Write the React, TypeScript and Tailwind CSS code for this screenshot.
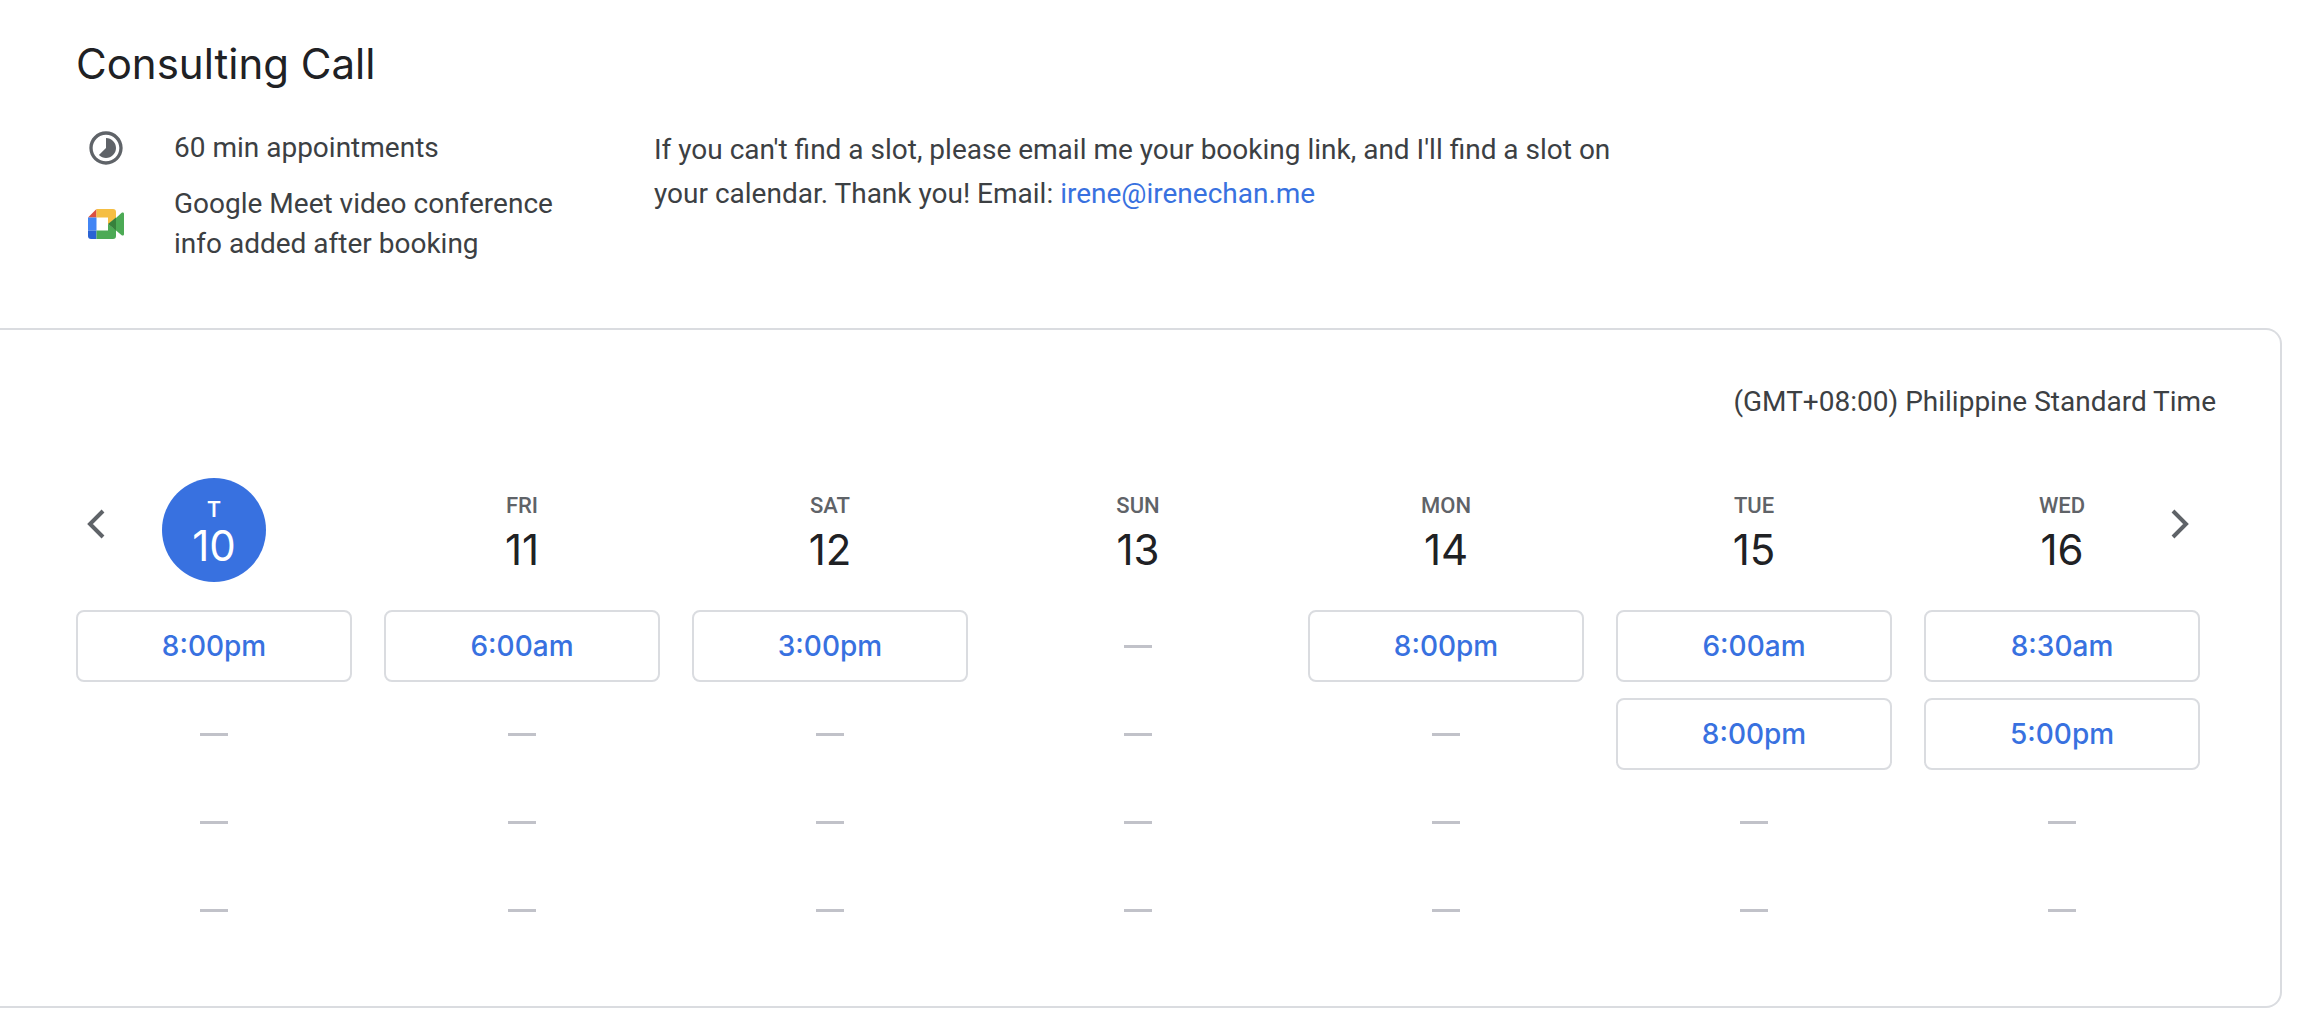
type Day = {
  label: string
  date: number
  slots: string[]
}

const days: Day[] = [
  { label: 'T', date: 10, slots: ['8:00pm'] },
  { label: 'FRI', date: 11, slots: ['6:00am'] },
  { label: 'SAT', date: 12, slots: ['3:00pm'] },
  { label: 'SUN', date: 13, slots: [] },
  { label: 'MON', date: 14, slots: ['8:00pm'] },
  { label: 'TUE', date: 15, slots: ['6:00am', '8:00pm'] },
  { label: 'WED', date: 16, slots: ['8:30am', '5:00pm'] },
]

const today = 10
const rows = [0, 1, 2, 3]

function classNames(...classes: any) {
  return classes.filter(Boolean).join(' ')
}

const DurationIcon = () => (
  <svg viewBox="0 0 24 24" className="h-10 w-10" fill="#5f6368" aria-hidden="true">
    <path d="M12 2C6.48 2 2 6.48 2 12s4.48 10 10 10 10-4.48 10-10S17.52 2 12 2zm0 18c-4.42 0-8-3.58-8-8s3.58-8 8-8 8 3.58 8 8-3.58 8-8 8z" />
    <path d="M12 6v6l-4.24 4.24C8.93 17.41 10.46 18 12 18c3.31 0 6-2.69 6-6s-2.69-6-6-6z" />
  </svg>
)

const MeetIcon = () => (
  <svg viewBox="0 0 36 30" className="h-[30px] w-9" aria-hidden="true">
    <path fill="#fff" d="M8 8h12v14H8z" />
    <path fill="#db4f40" d="M8.5 0v8.5H0z" />
    <path fill="#4285f4" d="M0 8.5h8.5v13H0z" />
    <path fill="#2a63d4" d="M0 21.5h8.5V30H3a3 3 0 0 1-3-3z" />
    <path fill="#f5be42" d="M8.5 0H25a3 3 0 0 1 3 3v6l-8 6.5v-7H8.5z" />
    <path fill="#4caa55" d="M8.5 30H25a3 3 0 0 0 3-3v-6l-8-6v6.5H8.5z" />
    <path fill="#4caa55" d="M28 9l5.7-5.2c.9-.7 2.3-.2 2.3 1v20.4c0 1.2-1.4 1.7-2.3 1L28 21.5z" />
    <path fill="#37813c" d="M28 8.5v13L20 15z" />
  </svg>
)

const Chevron = ({ d }: { d: string }) => (
  <svg viewBox="0 0 40 40" className="h-10 w-10" fill="none" stroke="#5f6368" strokeWidth="4" aria-hidden="true">
    <path d={d} />
  </svg>
)

const Header = () => (
  <header className="pl-[76px] pr-20 pt-9">
    <h1 className="font-[Inter,sans-serif] text-[42px] leading-14 text-[#202124]">Consulting Call</h1>
    <div className="mt-9 flex items-start">
      <ul className="w-[578px] shrink-0 space-y-4 pr-16 leading-10">
        <li className="flex items-center">
          <span className="flex w-[60px] shrink-0 justify-center">
            <DurationIcon />
          </span>
          <span className="ml-[38px]">60 min appointments</span>
        </li>
        <li className="flex items-center">
          <span className="flex w-[60px] shrink-0 justify-center">
            <MeetIcon />
          </span>
          <span className="ml-[38px]">Google Meet video conference info added after booking</span>
        </li>
      </ul>
      <p className="max-w-[1008px] leading-11">
        If you can't find a slot, please email me your booking link, and I'll find a slot on your calendar. Thank you!
        Email:{' '}
        <a href="mailto:irene@irenechan.me" className="text-[#3871e0]">
          irene@irenechan.me
        </a>
      </p>
    </div>
  </header>
)

const DayHeading = ({ day }: { day: Day }) => {
  const isToday = day.date === today
  return (
    <div
      className={classNames(
        'flex h-[104px] w-[104px] flex-col items-center justify-center justify-self-center rounded-full pt-2',
        isToday ? 'bg-[#3871e0] text-white' : 'gap-2 text-[#202124]',
      )}
    >
      <span className={classNames('text-[22px] leading-6 font-medium', !isToday && 'text-[#5f6368]')}>{day.label}</span>
      <span className="font-[Inter,sans-serif] text-[42px] leading-12">{day.date}</span>
    </div>
  )
}

const Slot = ({ time }: { time?: string }) => {
  if (!time) {
    return (
      <div className="flex h-[72px] items-center justify-center">
        <span className="h-[3px] w-7 bg-[#c1c2c9]" />
      </div>
    )
  }
  return (
    <button
      type="button"
      className="h-[72px] rounded-lg border-2 border-[#dadce0] font-[Inter,sans-serif] text-[28px] font-medium text-[#3871e0] hover:bg-blue-50"
    >
      {time}
    </button>
  )
}

const Calendar = () => (
  <section className="mt-16 mr-[22px] rounded-r-2xl border-2 border-l-0 border-[#dadce0] pt-12 pr-20 pb-15 pl-[76px]">
    <p className="-mr-4 text-right leading-12">(GMT+08:00) Philippine Standard Time</p>
    <div className="relative mt-13 grid grid-cols-7 gap-8">
      {days.map((day) => (
        <DayHeading key={day.date} day={day} />
      ))}
      <button type="button" aria-label="Previous week" className="absolute top-[26px] left-0">
        <Chevron d="M27 7 14 20l13 13" />
      </button>
      <button type="button" aria-label="Next week" className="absolute top-[26px] right-0">
        <Chevron d="M13 7l13 13-13 13" />
      </button>
    </div>
    <div className="mt-7 grid grid-cols-7 gap-x-8 gap-y-4">
      {rows.map((row) => days.map((day) => <Slot key={`${day.date}-${row}`} time={day.slots[row]} />))}
    </div>
  </section>
)

export default function App() {
  return (
    <main className="min-h-screen bg-white font-[Roboto,sans-serif] text-[28px] text-[#3c4043]">
      <Header />
      <Calendar />
    </main>
  )
}
